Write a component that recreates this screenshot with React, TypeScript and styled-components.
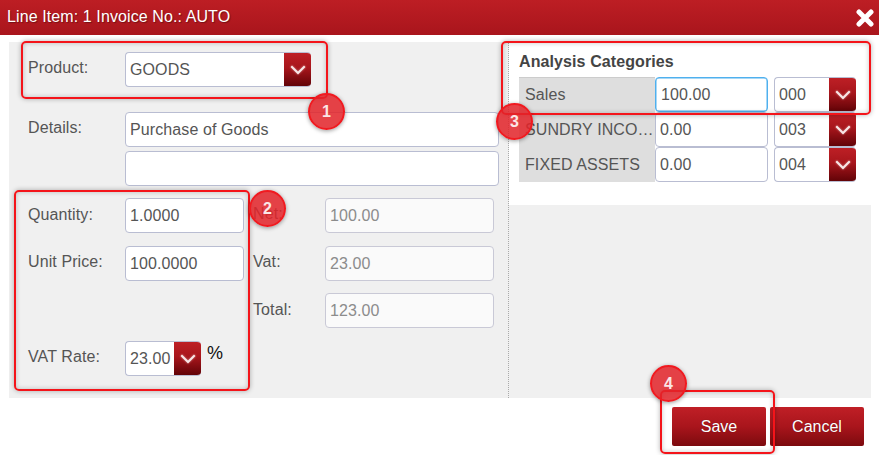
import React from "react";
import styled, { createGlobalStyle } from "styled-components";

const Global = createGlobalStyle`
  html, body { margin: 0; padding: 0; background: #fff; }
  body { font-family: "Liberation Sans", Arial, sans-serif; font-size: 16px; color: #555; letter-spacing: 0.1px; }
  #root { width: 879px; height: 455px; overflow: hidden; }
`;

const Dialog = styled.div`
  position: relative;
  width: 879px;
  height: 455px;
  background: #fff;
  overflow: hidden;
`;

const TitleBar = styled.header`
  height: 35px;
  display: flex;
  align-items: center;
  justify-content: space-between;
  padding: 0 5px 0 7px;
  box-sizing: border-box;
  background: linear-gradient(to bottom, #bd1e24, #a9151c);
  color: #fff;
  font-size: 16px;
  text-shadow: 1px 1px 1px rgba(0, 0, 0, 0.35);
`;

const TitleText = styled.span`
  margin-top: -2px;
`;

const CloseIcon = styled.svg`
  width: 18px;
  height: 18px;
  display: block;
`;

const Body = styled.main`
  display: flex;
  height: 356px;
  margin: 7px 8px 0 9px;
  background: #f0f0f0;
`;

const LeftPanel = styled.section`
  width: 500px;
  flex: none;
  box-sizing: border-box;
  padding: 10px 0 0 19px;
  border-right: 1px dotted #aaa;
`;

const RightPanel = styled.section`
  flex: 1;
  align-self: flex-start;
  height: 163px;
  box-sizing: border-box;
  padding: 10px 0 0 10px;
  background: #fff;
`;

const Row = styled.div<{ $mb?: number }>`
  display: flex;
  align-items: flex-start;
  margin-bottom: ${(p) => p.$mb ?? 0}px;
`;

const Label = styled.label<{ $w?: number; $pt?: number }>`
  width: ${(p) => p.$w ?? 97}px;
  flex: none;
  line-height: 18px;
  padding-top: ${(p) => p.$pt ?? 7}px;
  color: #555;
  font-size: 16px;
`;

const Input = styled.input<{ $w: number; $focus?: boolean }>`
  width: ${(p) => p.$w}px;
  height: 35px;
  box-sizing: border-box;
  padding: 0 4px 0 ${(p) => (p.$focus ? 5 : 4)}px;
  font: 16px "Liberation Sans", Arial, sans-serif;
  letter-spacing: 0.1px;
  color: #555;
  background: #fff;
  border: 1px solid ${(p) => (p.$focus ? "#4fb0ee" : "#b9bdd2")};
  box-shadow: ${(p) => (p.$focus ? "inset 0 0 0 0.5px #4fb0ee" : "none")};
  border-radius: 4px;
  outline: none;
  display: block;
  &:read-only[data-muted] {
    background: #fafafa;
    color: #8c8c8c;
    border-color: #c9c9d6;
  }
`;

const SelectBox = styled.div<{ $w: number }>`
  width: ${(p) => p.$w}px;
  height: 35px;
  box-sizing: border-box;
  display: flex;
  background: #fff;
  border: 1px solid #b9bdd2;
  border-right: none;
  border-radius: 4px;
  overflow: hidden;
`;

const SelectText = styled.span`
  flex: 1;
  line-height: 33px;
  padding-left: 4px;
  color: #555;
  white-space: nowrap;
`;

const Arrow = styled.span`
  width: 27px;
  flex: none;
  margin: -1px 0;
  display: flex;
  align-items: center;
  justify-content: center;
  background: linear-gradient(to bottom, #bf2026 0%, #a8161c 45%, #5e0206 100%);
`;

const ChevronIcon = styled.svg`
  display: block;
  filter: drop-shadow(0 0 1px rgba(255, 235, 235, 0.5));
`;

const Chevron = () => (
  <ChevronIcon width="18" height="12" viewBox="0 0 18 12">
    <polygon points="1.5,3 3,1.6 9,7.4 15,1.6 16.5,3 9,10.4" fill="#f8e6e6" />
  </ChevronIcon>
);

const Amounts = styled.div`
  display: flex;
  margin-top: 12px;
`;

const AmountLeft = styled.div`
  width: 225px;
  flex: none;
`;

const Percent = styled.span`
  margin-left: 6px;
  padding-top: 2px;
  color: #111;
  font-size: 18px;
  line-height: 20px;
`;

const Heading = styled.h2`
  margin: 0 0 6px;
  font-size: 16px;
  line-height: 19px;
  font-weight: bold;
  color: #444;
`;

const CategoryRow = styled.div`
  display: flex;
  height: 35px;
  width: 337px;
`;

const CategoryName = styled.div<{ $top?: boolean }>`
  width: 136px;
  flex: none;
  box-sizing: border-box;
  padding-left: 6px;
  background: #dedede;
  border-top: ${(p) => (p.$top ? "1px solid #ccc" : "none")};
  line-height: ${(p) => (p.$top ? 34 : 35)}px;
  color: #555;
  white-space: nowrap;
  overflow: hidden;
`;

const CategorySelect = styled.div`
  margin-left: 6px;
`;

const Footer = styled.footer`
  display: flex;
  justify-content: flex-end;
  gap: 4px;
  margin: 9px 15px 0 0;
`;

const Button = styled.button`
  width: 94px;
  height: 39px;
  border: none;
  border-radius: 2px;
  color: #fff;
  font: 16px "Liberation Sans", Arial, sans-serif;
  background: linear-gradient(to bottom, #c01f26 0%, #a9151c 50%, #7c0a0e 100%);
  text-shadow: 0 0 1px rgba(0, 0, 0, 0.4);
  padding: 0;
`;

const Callout = styled.div<{ $x: number; $y: number; $w: number; $h: number }>`
  position: absolute;
  left: ${(p) => p.$x}px;
  top: ${(p) => p.$y}px;
  width: ${(p) => p.$w}px;
  height: ${(p) => p.$h}px;
  box-sizing: border-box;
  border: 2px solid #f4141a;
  border-radius: 5px;
  box-shadow: 0 0 5px rgba(0, 0, 0, 0.3), inset 0 0 5px rgba(0, 0, 0, 0.22);
  pointer-events: none;
`;

const Badge = styled.div<{ $x: number; $y: number }>`
  position: absolute;
  left: ${(p) => p.$x}px;
  top: ${(p) => p.$y}px;
  width: 37px;
  height: 37px;
  box-sizing: border-box;
  border: 2px solid #f01a20;
  border-radius: 50%;
  background: rgba(226, 36, 42, 0.86);
  box-shadow: 0 1px 4px rgba(0, 0, 0, 0.4);
  color: #fbe6e6;
  font-size: 16px;
  font-weight: bold;
  line-height: 33px;
  text-align: center;
`;

const categories = [
  { name: "Sales", amount: "100.00", code: "000", focus: true },
  { name: "SUNDRY INCO…", amount: "0.00", code: "003" },
  { name: "FIXED ASSETS", amount: "0.00", code: "004" },
];

export default function App() {
  return (
    <Dialog>
      <Global />
      <TitleBar>
        <TitleText>Line Item: 1 Invoice No.: AUTO</TitleText>
        <CloseIcon viewBox="0 0 18 18">
          <path d="M3 3 L15 15 M15 3 L3 15" stroke="#fff" strokeWidth="5" strokeLinecap="round" />
        </CloseIcon>
      </TitleBar>
      <Body>
        <LeftPanel>
          <Row $mb={25}>
            <Label>Product:</Label>
            <SelectBox $w={186}>
              <SelectText>GOODS</SelectText>
              <Arrow><Chevron /></Arrow>
            </SelectBox>
          </Row>
          <Row $mb={4}>
            <Label>Details:</Label>
            <Input $w={374} readOnly value="Purchase of Goods" />
          </Row>
          <Row>
            <Label />
            <Input $w={374} readOnly value="" />
          </Row>
          <Amounts>
            <AmountLeft>
              <Row $mb={13}>
                <Label $pt={8}>Quantity:</Label>
                <Input $w={119} readOnly value="1.0000" />
              </Row>
              <Row $mb={60}>
                <Label>Unit Price:</Label>
                <Input $w={119} readOnly value="100.0000" />
              </Row>
              <Row>
                <Label>VAT Rate:</Label>
                <SelectBox $w={76}>
                  <SelectText>23.00</SelectText>
                  <Arrow><Chevron /></Arrow>
                </SelectBox>
                <Percent>%</Percent>
              </Row>
            </AmountLeft>
            <div>
              <Row $mb={13}>
                <Label $w={72}>Net:</Label>
                <Input $w={169} data-muted readOnly value="100.00" />
              </Row>
              <Row $mb={12}>
                <Label $w={72}>Vat:</Label>
                <Input $w={169} data-muted readOnly value="23.00" />
              </Row>
              <Row>
                <Label $w={72} $pt={8}>Total:</Label>
                <Input $w={169} data-muted readOnly value="123.00" />
              </Row>
            </div>
          </Amounts>
        </LeftPanel>
        <RightPanel>
          <Heading>Analysis Categories</Heading>
          {categories.map((c, i) => (
            <CategoryRow key={c.code}>
              <CategoryName $top={i === 0}>{c.name}</CategoryName>
              <Input $w={113} $focus={c.focus} readOnly value={c.amount} />
              <CategorySelect>
                <SelectBox $w={82}>
                  <SelectText>{c.code}</SelectText>
                  <Arrow><Chevron /></Arrow>
                </SelectBox>
              </CategorySelect>
            </CategoryRow>
          ))}
        </RightPanel>
      </Body>
      <Footer>
        <Button>Save</Button>
        <Button>Cancel</Button>
      </Footer>
      <Callout $x={21} $y={41} $w={307} $h={58} />
      <Callout $x={14} $y={190} $w={236} $h={201} />
      <Callout $x={501} $y={41} $w={370} $h={74} />
      <Callout $x={660} $y={390} $w={115} $h={64} />
      <Badge $x={308} $y={93}>1</Badge>
      <Badge $x={249} $y={190}>2</Badge>
      <Badge $x={496} $y={103}>3</Badge>
      <Badge $x={650} $y={365}>4</Badge>
    </Dialog>
  );
}
